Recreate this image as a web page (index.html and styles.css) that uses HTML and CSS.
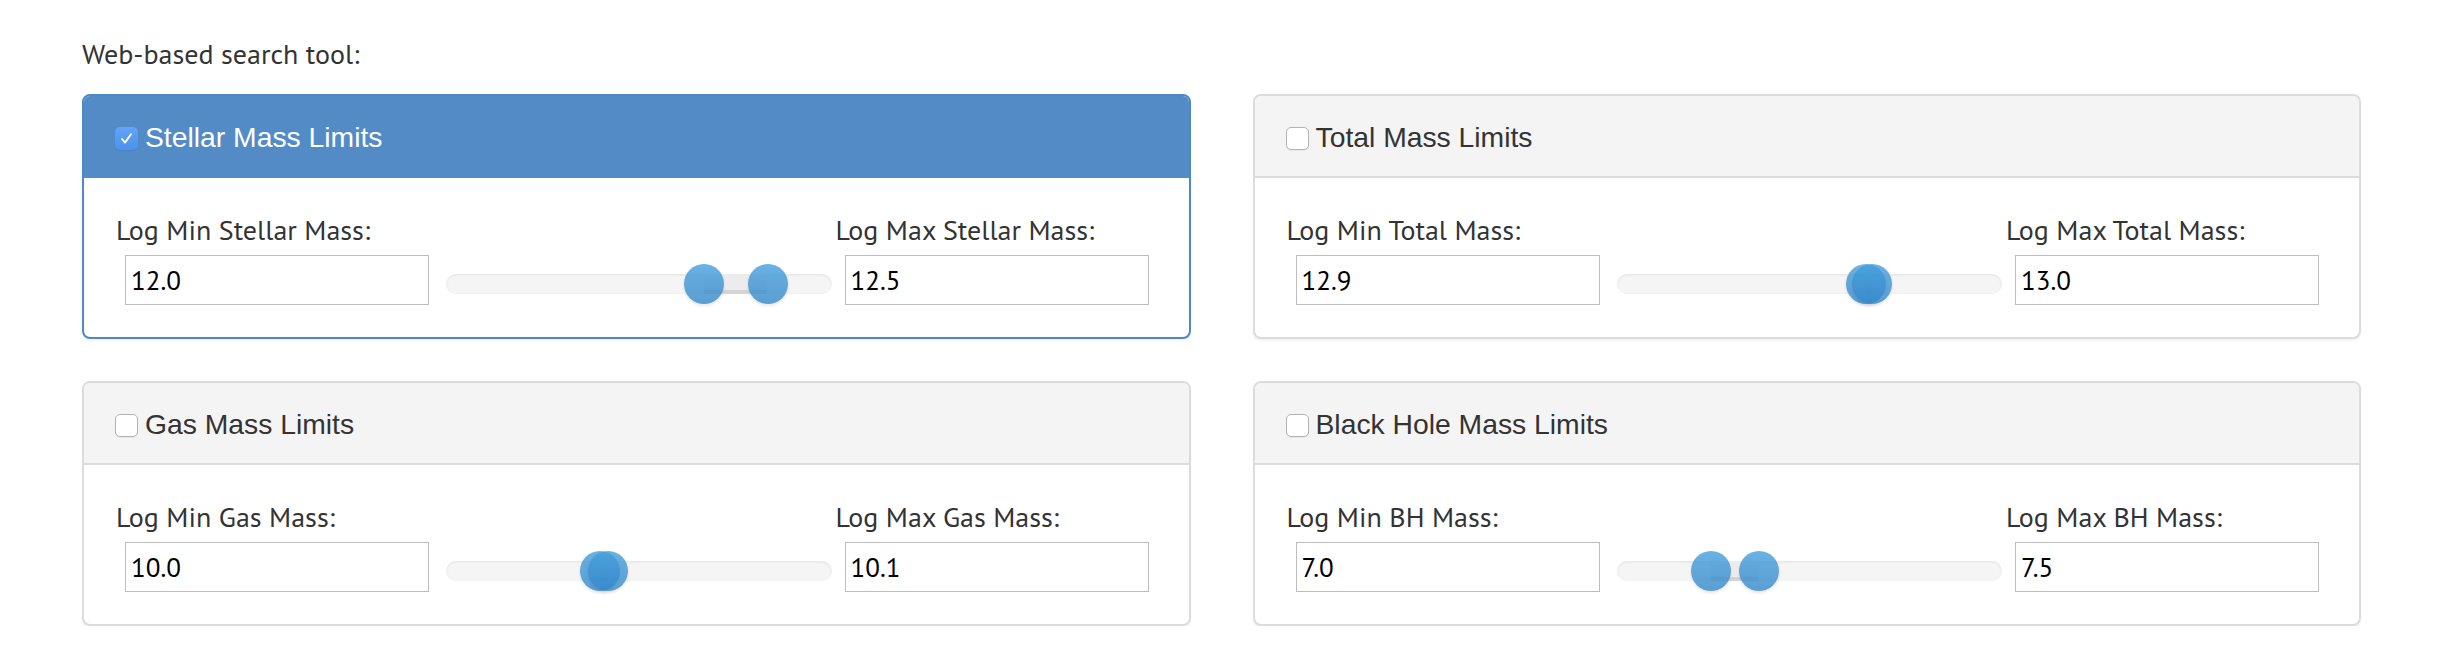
FILE: index.html
```html
<!DOCTYPE html>
<html>
<head>
<meta charset="utf-8">
<title>Web-based search tool</title>
<link rel="stylesheet" href="styles.css">
</head>
<body>
<div class="page">
  <p class="intro">Web-based search tool:</p>
  <div class="grid">

    <section class="panel panel-primary">
      <div class="panel-heading">
        <span class="cb cb-checked"><svg viewBox="0 0 23 23" width="23" height="23"><path d="M7 12 L10 15.6 L16 7.2" fill="none" stroke="#fff" stroke-width="1.9" stroke-linecap="round" stroke-linejoin="round"/></svg></span>
        <span class="panel-title">Stellar Mass Limits</span>
      </div>
      <div class="panel-body">
        <label class="lbl lbl-min">Log Min Stellar Mass:</label>
        <input class="num num-min" type="text" value="12.0">
        <div class="slider">
          <div class="track"></div>
          <div class="selection" style="left:66.8%;width:16.6%"></div>
          <div class="handle" style="left:66.8%"></div>
          <div class="handle" style="left:83.4%"></div>
        </div>
        <label class="lbl lbl-max">Log Max Stellar Mass:</label>
        <input class="num num-max" type="text" value="12.5">
      </div>
    </section>

    <section class="panel">
      <div class="panel-heading">
        <span class="cb"></span>
        <span class="panel-title">Total Mass Limits</span>
      </div>
      <div class="panel-body">
        <label class="lbl lbl-min">Log Min Total Mass:</label>
        <input class="num num-min" type="text" value="12.9">
        <div class="slider">
          <div class="track"></div>
          <div class="selection" style="left:64.8%;width:1.5%"></div>
          <div class="handle" style="left:64.8%"></div>
          <div class="handle" style="left:66.3%"></div>
        </div>
        <label class="lbl lbl-max">Log Max Total Mass:</label>
        <input class="num num-max" type="text" value="13.0">
      </div>
    </section>

    <section class="panel">
      <div class="panel-heading">
        <span class="cb"></span>
        <span class="panel-title">Gas Mass Limits</span>
      </div>
      <div class="panel-body">
        <label class="lbl lbl-min">Log Min Gas Mass:</label>
        <input class="num num-min" type="text" value="10.0">
        <div class="slider">
          <div class="track"></div>
          <div class="selection" style="left:39.9%;width:2.1%"></div>
          <div class="handle" style="left:39.9%"></div>
          <div class="handle" style="left:42%"></div>
        </div>
        <label class="lbl lbl-max">Log Max Gas Mass:</label>
        <input class="num num-max" type="text" value="10.1">
      </div>
    </section>

    <section class="panel">
      <div class="panel-heading">
        <span class="cb"></span>
        <span class="panel-title">Black Hole Mass Limits</span>
      </div>
      <div class="panel-body">
        <label class="lbl lbl-min">Log Min BH Mass:</label>
        <input class="num num-min" type="text" value="7.0">
        <div class="slider">
          <div class="track"></div>
          <div class="selection" style="left:24.6%;width:12.4%"></div>
          <div class="handle" style="left:24.6%"></div>
          <div class="handle" style="left:37%"></div>
        </div>
        <label class="lbl lbl-max">Log Max BH Mass:</label>
        <input class="num num-max" type="text" value="7.5">
      </div>
    </section>

  </div>
</div>
</body>
</html>
```
FILE: styles.css
```css
html, body {
  margin: 0;
  padding: 0;
  background: #fff;
}

body {
  font-family: "PT Sans", "Lato", sans-serif;
  color: #333;
}

.page {
  padding: 34px 103px 0 82px;
}

.intro {
  margin: 0 0 20px 0;
  font-size: 28px;
  line-height: 40px;
  color: #333;
}

.grid {
  display: grid;
  grid-template-columns: 1fr 1fr;
  column-gap: 62px;
  row-gap: 42px;
}

.panel {
  border: 2px solid #dcdcdc;
  border-radius: 8px;
  background: #fff;
  box-shadow: 0 2px 2px rgba(0, 0, 0, 0.05);
  overflow: hidden;
}

.panel-heading {
  display: flex;
  align-items: center;
  height: 82px;
  box-sizing: border-box;
  padding: 3px 31px 0 31px;
  background: #f4f4f4;
  border-bottom: 2px solid #dcdcdc;
}

.panel-title {
  font-family: "Liberation Sans", Arial, sans-serif;
  font-size: 28.3px;
  color: #333;
  margin-left: 7px;
}

.panel-primary {
  border-color: #4f88c4;
}

.panel-primary .panel-heading {
  background: #528bc6;
  border-bottom-color: #528bc6;
}

.panel-primary .panel-title {
  color: #fff;
}

.cb {
  display: inline-flex;
  width: 23px;
  height: 23px;
  box-sizing: border-box;
  border-radius: 5px;
  border: 1.5px solid #b4b4b4;
  background: #fff;
  box-shadow: 0 1px 1px rgba(0, 0, 0, 0.06);
  margin-top: 1px;
}

.cb-checked {
  border: none;
  background: linear-gradient(#62a4f7, #4b92ef);
}

.cb svg {
  display: block;
}

.panel-body {
  display: grid;
  grid-template-columns: 314px 1fr 314px;
  grid-template-rows: 40px 50px;
  row-gap: 5px;
  padding: 32px 40px 32px 31px;
}

.lbl {
  font-size: 28px;
  line-height: 40px;
  color: #333;
  margin-left: 1px;
  white-space: nowrap;
}

.lbl-min {
  grid-column: 1;
  grid-row: 1;
}

.lbl-max {
  grid-column: 3;
  grid-row: 1;
}

.num {
  width: 304px;
  height: 50px;
  box-sizing: border-box;
  margin: 0 0 0 10px;
  padding: 0 0 0 5px;
  border: 1px solid #bdbdbd;
  border-radius: 0;
  font-family: "PT Sans", "Lato", sans-serif;
  font-size: 27px;
  color: #000;
  background: #fff;
  outline: none;
}

.num-min {
  grid-column: 1;
  grid-row: 2;
}

.num-max {
  grid-column: 3;
  grid-row: 2;
}

.slider {
  grid-column: 2;
  grid-row: 2;
  position: relative;
  height: 50px;
  margin: 0 3px 0 17px;
}

.track {
  position: absolute;
  left: 0;
  right: 0;
  top: 19px;
  height: 20px;
  border-radius: 10px;
  background: #f5f5f5;
  box-shadow: inset 0 1px 3px rgba(0, 0, 0, 0.08);
}

.selection {
  position: absolute;
  top: 19px;
  height: 20px;
  background: #ececec;
  box-shadow: inset 0 -4px 0 rgba(0, 0, 0, 0.1);
}

.handle {
  position: absolute;
  top: 9px;
  width: 40px;
  height: 40px;
  margin-left: -20px;
  border-radius: 50%;
  background: linear-gradient(#45a0dc, #3386c8);
  opacity: 0.8;
  box-shadow: 0 2px 3px rgba(0, 0, 0, 0.12);
}
```
